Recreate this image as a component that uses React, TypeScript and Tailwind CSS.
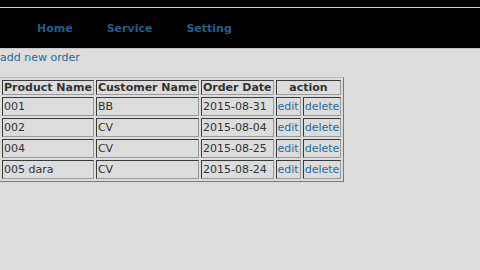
import React from "react";

const orders = [
  { product: "001", customer: "BB", date: "2015-08-31" },
  { product: "002", customer: "CV", date: "2015-08-04" },
  { product: "004", customer: "CV", date: "2015-08-25" },
  { product: "005 dara", customer: "CV", date: "2015-08-24" },
];

const cell =
  "border border-t-[#3a3a3a] border-l-[#3a3a3a] border-b-[#9a9a9a] border-r-[#9a9a9a] px-[1px] leading-none";

const App: React.FC = () => {
  return (
    <div className="w-[480px] h-[270px] bg-[#dcdcdc] overflow-hidden font-['DejaVu_Sans',Verdana,sans-serif] text-[11px] text-[#333]">
      <div className="bg-black h-[7px]" />
      <div className="h-[1px] bg-[#d0d0d0]" />
      <div className="bg-black h-[40px] flex items-center pl-[37px] gap-[34px] font-bold text-[#1f5f8f] pt-[3px]">
        <span>Home</span>
        <span>Service</span>
        <span>Setting</span>
      </div>
      <div className="h-[1px] bg-[#c4c4c4]" />
      <div className="text-[#2a6a9a] leading-none mt-[3px]">add new order</div>

      <table className="mt-[14px] border-separate border-spacing-[2px] border border-t-[#bdbdbd] border-l-[#bdbdbd] border-b-[#777] border-r-[#777] -ml-[1px]">
        <thead>
          <tr className="font-bold">
            <th className={cell + " h-[15px]"}>Product Name</th>
            <th className={cell + " h-[15px]"}>Customer Name</th>
            <th className={cell + " h-[15px]"}>Order Date</th>
            <th className={cell + " h-[15px]"} colSpan={2}>
              action
            </th>
          </tr>
        </thead>
        <tbody>
          {orders.map((o) => (
            <tr key={o.product}>
              <td className={cell + " h-[19px]"}>{o.product}</td>
              <td className={cell + " h-[19px]"}>{o.customer}</td>
              <td className={cell + " h-[19px]"}>{o.date}</td>
              <td className={cell + " h-[19px] text-[#2a6a9a]"}>edit</td>
              <td className={cell + " h-[19px] text-[#2a6a9a]"}>delete</td>
            </tr>
          ))}
        </tbody>
      </table>
    </div>
  );
};

export default App;
